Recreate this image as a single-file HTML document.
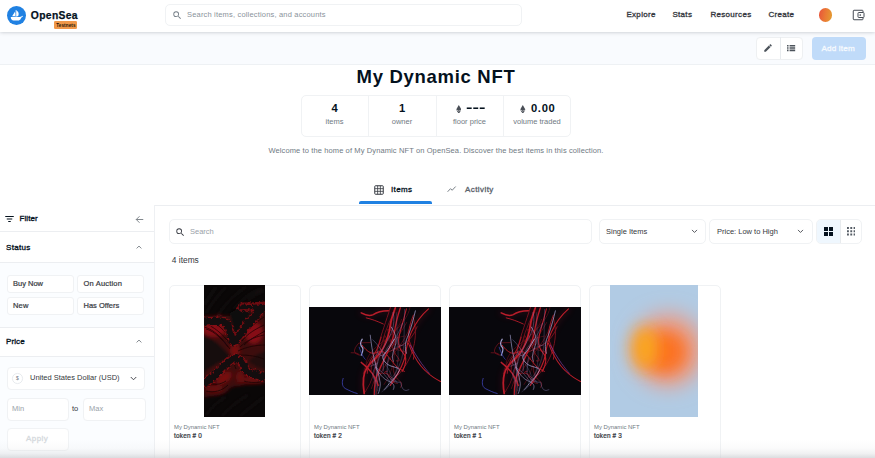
<!DOCTYPE html>
<html><head><meta charset="utf-8"><title>My Dynamic NFT - OpenSea</title>
<style>
*{box-sizing:border-box;margin:0;padding:0}
html,body{width:875px;height:458px;overflow:hidden;background:#fff}
body{position:relative;font-family:"Liberation Sans",sans-serif;color:#04111d}
.a{position:absolute;white-space:nowrap}
.t{position:absolute;white-space:nowrap;line-height:1}
#hdr{left:0;top:0;width:875px;height:32px;background:#fff;box-shadow:0 0 4px rgba(4,17,29,.25);z-index:5}
#sub{left:0;top:32px;width:875px;height:33px;background:#f9fbfe;border-bottom:1px solid #eef1f4}
.box{position:absolute;border:1px solid #f0f2f4;border-radius:4px;background:#fff}
</style></head><body>

<!-- sub bar -->
<div id="sub" class="a"></div>
<div class="box" style="left:756px;top:37px;width:46.500px;height:22.500px;border-color:#eef0f2"></div>
<div class="a" style="left:780px;top:37px;width:1px;height:22px;background:#e8ebee"></div>
<svg class="a" style="left:763px;top:43px" width="10" height="10" viewBox="0 0 24 24"><path fill="#4c535b" d="M3 17.25V21h3.75L17.81 9.94l-3.75-3.75L3 17.25zM20.71 7.04a1 1 0 0 0 0-1.41l-2.34-2.34a1 1 0 0 0-1.41 0l-1.83 1.83 3.75 3.75 1.83-1.83z"/></svg>
<svg class="a" style="left:786px;top:43px" width="10" height="10" viewBox="0 0 24 24"><path fill="#4c535b" d="M2.500 4.500h3.600v3.800H2.500zM8.600 4.500H22v3.800H8.600zM2.500 10.100h3.600v3.800H2.500zM8.600 10.100H22v3.800H8.600zM2.500 15.700h3.600v3.800H2.500zM8.600 15.700H22v3.800H8.600z"/></svg>
<div class="a" style="left:812px;top:37px;width:54px;height:22.500px;border-radius:4px;background:#c0dbf9"></div>
<div class="t" style="left:821.500px;top:44.600px;font-size:8.100px;color:#f6fafe;letter-spacing:0.17px;-webkit-text-stroke:0.3px #f6fafe">Add item</div>

<!-- header -->
<div id="hdr" class="a">
  <div class="a" style="left:7.400px;top:5.700px;width:18.900px;height:18.900px;border-radius:50%;background:#2081e2"></div>
  <svg class="a" style="left:7.400px;top:5.700px" width="18.900" height="18.900" viewBox="0 0 100 100"><path fill="#fff" d="M27 54L42 30C44 38 44 47 43 54ZM46 21h3.500V62H46ZM50.500 24C60 30 66 40 59 54H50.500ZM20 58H46V62H49.500V58H68C74 58 78 54 84 52V56C78 58 75 64 72 69C69 74 65 77 59 77H35C26 77 20 70 20 60Z"/></svg>
  <div class="t" style="left:30.800px;top:10.900px;font-size:10.300px;font-weight:bold;letter-spacing:.36px;-webkit-text-stroke:.25px #04111d">OpenSea</div>
  <div class="a" style="left:54px;top:21.4px;width:23.3px;height:7.3px;border-radius:1.2px;background:#f0984a"></div>
  <div class="t" style="left:56.200px;top:24.200px;font-size:4.600px;font-weight:bold;color:#1f1508;letter-spacing:.12px">Testnets</div>
  <div class="box" style="left:165px;top:4px;width:357px;height:22px;border-radius:5px"></div>
  <svg class="a" style="left:171.500px;top:9.800px" width="10.500" height="10.500" viewBox="0 0 24 24"><path fill="#707a83" d="M15.5 14h-.79l-.28-.27A6.47 6.47 0 0 0 16 9.5 6.5 6.5 0 1 0 9.500 16c1.610 0 3.090-.59 4.230-1.570l.27.28v.79l5 4.990L20.490 19l-4.990-5zm-6 0C7.010 14 5 11.990 5 9.500S7.010 5 9.500 5 14 7.010 14 9.500 11.990 14 9.500 14z"/></svg>
  <div class="t" style="left:187px;top:11.300px;font-size:7.500px;letter-spacing:.18px;color:#8a939b">Search items, collections, and accounts</div>
  <div class="t" style="left:626.400px;top:11.300px;font-size:8px;letter-spacing:.32px;-webkit-text-stroke:.32px #353840;color:#353840">Explore</div>
  <div class="t" style="left:672.400px;top:11.300px;font-size:8px;letter-spacing:.32px;-webkit-text-stroke:.32px #353840;color:#353840">Stats</div>
  <div class="t" style="left:710.400px;top:11.300px;font-size:8px;letter-spacing:.32px;-webkit-text-stroke:.32px #353840;color:#353840">Resources</div>
  <div class="t" style="left:768.400px;top:11.300px;font-size:8px;letter-spacing:.32px;-webkit-text-stroke:.32px #353840;color:#353840">Create</div>
  <div class="a" style="left:818.600px;top:8.200px;width:13.400px;height:13.400px;border-radius:50%;background:linear-gradient(100deg,#e8523c 0%,#ea7a34 50%,#e3a030 100%)"></div>
  <svg class="a" style="left:852px;top:9px" width="13" height="12" viewBox="0 0 26 24"><path fill="none" stroke="#454b54" stroke-width="2" d="M22 6V4a1.500 1.500 0 0 0-1.500-1.500H4A1.500 1.500 0 0 0 2.500 4v16A1.500 1.500 0 0 0 4 21.500h16.500A1.500 1.500 0 0 0 22 20v-2"/><rect x="12" y="7" width="12" height="10" rx="1.500" fill="none" stroke="#454b54" stroke-width="2"/><circle cx="16.500" cy="12" r="1.700" fill="#454b54"/></svg>
</div>

<!-- title -->
<div class="t" style="left:0;width:875px;text-align:center;top:67.800px;font-size:18.500px;font-weight:bold;left:-1.500px;letter-spacing:.7px">My Dynamic NFT</div>

<!-- stats -->
<div class="box" style="left:300.500px;top:94.500px;width:270.500px;height:42.500px;border-radius:5px"></div>
<div class="a" style="left:368px;top:95px;width:1px;height:42px;background:#f0f2f4"></div>
<div class="a" style="left:436px;top:95px;width:1px;height:42px;background:#f0f2f4"></div>
<div class="a" style="left:503px;top:95px;width:1px;height:42px;background:#f0f2f4"></div>
<div class="t" style="left:301px;width:67px;text-align:center;top:103px;font-size:11.200px;font-weight:bold">4</div>
<div class="t" style="left:368px;width:68px;text-align:center;top:103px;font-size:11.200px;font-weight:bold">1</div>
<div class="t" style="left:466px;top:103px;font-size:11.200px;font-weight:bold;transform:scale(1.740,1.150);transform-origin:0 60%">---</div>
<div class="t" style="left:531px;top:103px;font-size:11.200px;font-weight:bold;letter-spacing:.65px">0.00</div>
<svg class="a" style="left:455.600px;top:104.600px" width="5.600" height="8.800" viewBox="0 0 14 22"><path fill="#4a4f57" d="M7 0 L0.500 11 L7 15 L13.500 11 Z"/><path fill="#4a4f57" d="M7 16.300 L0.500 12.400 L7 22 L13.500 12.400 Z"/></svg>
<svg class="a" style="left:520.400px;top:104.600px" width="5.600" height="8.800" viewBox="0 0 14 22"><path fill="#4a4f57" d="M7 0 L0.500 11 L7 15 L13.500 11 Z"/><path fill="#4a4f57" d="M7 16.300 L0.500 12.400 L7 22 L13.500 12.400 Z"/></svg>
<div class="t" style="left:301px;width:67px;text-align:center;top:118px;font-size:7.500px;color:#707a83">items</div>
<div class="t" style="left:368px;width:68px;text-align:center;top:118px;font-size:7.500px;color:#707a83">owner</div>
<div class="t" style="left:436px;width:67px;text-align:center;top:118px;font-size:7.500px;color:#707a83">floor price</div>
<div class="t" style="left:503px;width:68px;text-align:center;top:118px;font-size:7.500px;color:#707a83">volume traded</div>

<div class="t" style="left:0;width:872px;text-align:center;top:146.500px;font-size:7.500px;letter-spacing:.115px;color:#707a83">Welcome to the home of My Dynamic NFT on OpenSea. Discover the best items in this collection.</div>

<!-- tabs -->
<div class="a" style="left:0;top:204.500px;width:875px;height:1px;background:#eceef1"></div>
<div class="a" style="left:359px;top:201.300px;width:73px;height:2.900px;background:#2081e2;border-radius:2px 2px 0 0"></div>
<svg class="a" style="left:373.500px;top:184.500px" width="10" height="10" viewBox="0 0 20 20"><rect x="1.500" y="1.500" width="17" height="17" rx="1.500" fill="none" stroke="#353840" stroke-width="2"/><path stroke="#353840" stroke-width="1.600" d="M1.500 7.300H18.500M1.500 12.700H18.500M7.300 1.500V18.500M12.700 1.500V18.500"/></svg>
<div class="t" style="left:391px;top:185.700px;font-size:8px;color:#04111d;letter-spacing:0.36px;-webkit-text-stroke:0.3px #04111d">Items</div>
<svg class="a" style="left:447px;top:186px" width="9.500" height="6.500" viewBox="0 0 22 16"><path fill="none" stroke="#5a626b" stroke-width="2" stroke-linejoin="round" stroke-linecap="round" d="M1.500 13.500L8 6.500L12 10.500L20 2"/></svg>
<div class="t" style="left:465px;top:185.700px;font-size:8px;color:#5a626b;letter-spacing:0.42px;-webkit-text-stroke:0.3px #5a626b">Activity</div>

<!-- sidebar -->
<div class="a" style="left:0;top:205px;width:154px;height:253px;background:#fbfdff"></div>
<div class="a" style="left:154px;top:205px;width:1px;height:253px;background:#eef0f3"></div>
<div class="a" style="left:0;top:205px;width:154px;height:27px;background:#fff;border-bottom:1px solid #eceef1"></div>
<svg class="a" style="left:5px;top:214.500px" width="9" height="8" viewBox="0 0 18 16"><path stroke="#04111d" stroke-width="2.200" d="M0.500 3H17.500M3.500 8H14.500M6.500 13H11.500"/></svg>
<div class="t" style="left:19.500px;top:214.500px;font-size:8px;letter-spacing:0.1px;-webkit-text-stroke:0.32px #04111d">Filter</div>
<svg class="a" style="left:135px;top:214.500px" width="9" height="9" viewBox="0 0 18 18"><path fill="none" stroke="#6a7178" stroke-width="1.700" d="M16.500 9H2.500M9 2.500L2.500 9L9 15.500"/></svg>
<div class="a" style="left:0;top:232px;width:154px;height:31px;background:#fff;border-bottom:1px solid #eceef1"></div>
<div class="t" style="left:6px;top:243.500px;font-size:8px;letter-spacing:0.32px;-webkit-text-stroke:0.32px #04111d">Status</div>
<svg class="a" style="left:136px;top:245px" width="6" height="4.300" viewBox="0 0 14 10"><path fill="none" stroke="#6a7178" stroke-width="2" d="M1.500 8L7 2.500L12.500 8"/></svg>
<div class="box" style="left:6.500px;top:274.500px;width:67px;height:18.500px;border-radius:3px"></div>
<div class="box" style="left:77px;top:274.500px;width:67px;height:18.500px;border-radius:3px"></div>
<div class="box" style="left:6.500px;top:296.500px;width:67px;height:18.500px;border-radius:3px"></div>
<div class="box" style="left:77px;top:296.500px;width:67px;height:18.500px;border-radius:3px"></div>
<div class="t" style="left:13px;top:280.200px;font-size:7.500px;color:#353840;letter-spacing:0.0px;-webkit-text-stroke:0.2px #353840">Buy Now</div>
<div class="t" style="left:83.500px;top:280.200px;font-size:7.500px;color:#353840;letter-spacing:0.18px;-webkit-text-stroke:0.2px #353840">On Auction</div>
<div class="t" style="left:13px;top:302.200px;font-size:7.500px;color:#353840;letter-spacing:0.18px;-webkit-text-stroke:0.2px #353840">New</div>
<div class="t" style="left:83.500px;top:302.200px;font-size:7.500px;color:#353840;letter-spacing:0px;-webkit-text-stroke:0.2px #353840">Has Offers</div>
<div class="a" style="left:0;top:326.500px;width:154px;height:30.500px;background:#fff;border-top:1px solid #eceef1;border-bottom:1px solid #eceef1"></div>
<div class="t" style="left:6px;top:337.500px;font-size:8px;letter-spacing:0.09px;-webkit-text-stroke:0.32px #04111d">Price</div>
<svg class="a" style="left:136px;top:339px" width="6" height="4.300" viewBox="0 0 14 10"><path fill="none" stroke="#6a7178" stroke-width="2" d="M1.500 8L7 2.500L12.500 8"/></svg>
<div class="box" style="left:6.500px;top:367.300px;width:138.500px;height:23px;border-radius:4px"></div>
<div class="a" style="left:12.200px;top:373.200px;width:10.500px;height:10.500px;border-radius:50%;border:1px solid #e8ebee;background:#fff"></div>
<div class="t" style="left:16px;top:376px;font-size:5px;color:#707a83">$</div>
<div class="t" style="left:30px;top:374.300px;font-size:7.500px;color:#353840">United States Dollar (USD)</div>
<svg class="a" style="left:130px;top:376px" width="7" height="5" viewBox="0 0 14 10"><path fill="none" stroke="#353840" stroke-width="1.800" d="M1.500 2L7 7.500L12.500 2"/></svg>
<div class="box" style="left:6.500px;top:398.200px;width:62px;height:22.500px;border-radius:4px"></div>
<div class="box" style="left:83px;top:398.200px;width:62.500px;height:22.500px;border-radius:4px"></div>
<div class="t" style="left:12px;top:405px;font-size:7.500px;color:#9aa2a9">Min</div>
<div class="t" style="left:72px;top:405px;font-size:7.500px;color:#353840">to</div>
<div class="t" style="left:89px;top:405px;font-size:7.500px;color:#9aa2a9">Max</div>
<div class="box" style="left:6.500px;top:427.500px;width:62px;height:23px;border-radius:4px;border-color:#f1f3f5"></div>
<div class="t" style="left:26px;top:435px;font-size:8px;color:#d5d9dd;letter-spacing:0.44px;-webkit-text-stroke:0.3px #d5d9dd">Apply</div>

<!-- main toolbar -->
<div class="box" style="left:168.500px;top:219px;width:423px;height:24.500px;border-radius:5px"></div>
<svg class="a" style="left:174.500px;top:226.500px" width="10.500" height="10.500" viewBox="0 0 24 24"><path fill="#353840" d="M15.5 14h-.79l-.28-.27A6.47 6.47 0 0 0 16 9.5 6.5 6.5 0 1 0 9.500 16c1.610 0 3.090-.59 4.230-1.570l.27.28v.79l5 4.990L20.490 19l-4.990-5zm-6 0C7.010 14 5 11.990 5 9.500S7.010 5 9.500 5 14 7.010 14 9.500 11.990 14 9.500 14z"/></svg>
<div class="t" style="left:190px;top:227.500px;font-size:7.500px;color:#9aa2a9">Search</div>
<div class="box" style="left:599px;top:219px;width:106.500px;height:24.500px;border-radius:5px"></div>
<div class="t" style="left:606px;top:227.500px;font-size:7.500px;color:#353840">Single Items</div>
<svg class="a" style="left:690.500px;top:229.300px" width="7" height="4.600" viewBox="0 0 14 10"><path fill="none" stroke="#353840" stroke-width="1.800" d="M1.500 2L7 7.500L12.500 2"/></svg>
<div class="box" style="left:709px;top:219px;width:103.500px;height:24.500px;border-radius:5px"></div>
<div class="t" style="left:717px;top:227.500px;font-size:7.500px;color:#353840">Price: Low to High</div>
<svg class="a" style="left:797px;top:229.300px" width="7" height="4.600" viewBox="0 0 14 10"><path fill="none" stroke="#353840" stroke-width="1.800" d="M1.500 2L7 7.500L12.500 2"/></svg>
<div class="box" style="left:816px;top:219px;width:46px;height:24.500px;border-radius:5px;overflow:hidden"><div style="width:23.500px;height:24px;background:#eff7fe;border-right:1px solid #e8ebee"></div></div>
<svg class="a" style="left:823.500px;top:227px" width="9" height="9" viewBox="0 0 18 18"><path fill="#04111d" d="M0 0h8v8H0zM10 0h8v8h-8zM0 10h8v8H0zM10 10h8v8h-8z"/></svg>
<svg class="a" style="left:846.800px;top:227.200px" width="8.500" height="8.500" viewBox="0 0 18 18"><path fill="#555c65" d="M0 0h4v4H0zM7 0h4v4H7zM14 0h4v4h-4zM0 7h4v4H0zM7 7h4v4H7zM14 7h4v4h-4zM0 14h4v4H0zM7 14h4v4H7zM14 14h4v4h-4z"/></svg>
<div class="t" style="left:171.800px;top:256.300px;font-size:8.400px;color:#353840">4 items</div>

<!-- cards -->
<div class="box" style="left:168.500px;top:284.500px;width:132.500px;height:190px;border-radius:5px"></div>
<div class="box" style="left:308.500px;top:284.500px;width:132.500px;height:190px;border-radius:5px"></div>
<div class="box" style="left:448.500px;top:284.500px;width:132.500px;height:190px;border-radius:5px"></div>
<div class="box" style="left:588.500px;top:284.500px;width:132.500px;height:190px;border-radius:5px"></div>

<svg class="a" style="left:204px;top:285px" width="61" height="132" viewBox="0 0 61 132">
<defs>
<filter id="fb1" x="-20%" y="-20%" width="140%" height="140%"><feGaussianBlur stdDeviation="1.400"/></filter>
<filter id="fb3" x="-20%" y="-20%" width="140%" height="140%"><feGaussianBlur stdDeviation="2.200"/></filter>
<filter id="fb4" x="-20%" y="-20%" width="140%" height="140%"><feGaussianBlur stdDeviation="0.450"/></filter>
<filter id="fd" color-interpolation-filters="sRGB" x="-20%" y="-20%" width="140%" height="140%"><feTurbulence type="fractalNoise" baseFrequency="0.320" numOctaves="2" seed="4" result="n"/><feDisplacementMap in="SourceGraphic" in2="n" scale="5.500" xChannelSelector="R" yChannelSelector="G"/><feGaussianBlur stdDeviation="0.550"/></filter>
<filter id="fd2" color-interpolation-filters="sRGB" x="-20%" y="-20%" width="140%" height="140%"><feTurbulence type="fractalNoise" baseFrequency="0.400" numOctaves="2" seed="9" result="n"/><feDisplacementMap in="SourceGraphic" in2="n" scale="5.500" xChannelSelector="R" yChannelSelector="G"/><feGaussianBlur stdDeviation="0.700"/></filter>
<clipPath id="fc"><rect width="61" height="132"/></clipPath>
</defs>
<g clip-path="url(#fc)">
<rect width="61" height="132" fill="#0a0707"/>
<g filter="url(#fb1)" stroke="#2a2627" stroke-width=".9" fill="none" opacity=".8">
<path d="M2 28C8 18 14 10 22 2M14 30C22 18 30 10 42 2M30 24C38 14 46 8 58 4M44 16C50 10 54 8 60 6M2 130C8 122 14 116 22 112M18 131C26 122 34 116 44 110M36 131C44 124 52 118 60 112M0 20C4 14 8 8 12 2"/>
</g>
<g filter="url(#fb1)">
<path fill="#3e070a" d="M0 31C4 29 8 32 12 30C15 27 18 30 21 31C24 30 27 32 29 30C32 28 33 22 36 20C42 17 50 20 61 19L61 98C54 100 46 98 40 100C34 102 28 100 24 106C18 112 8 110 0 113Z"/>
<path fill="#0c0707" opacity=".85" d="M0 50C6 52 14 58 20 64C24 68 27 70 27 72C22 76 14 78 8 82C4 84 2 86 0 88Z"/>
<path fill="#0c0707" opacity=".55" d="M61 66C54 68 48 72 44 76C48 80 54 84 61 84Z"/>
<path fill="#0a0707" opacity=".95" d="M25 28C27 36 29 46 31 51C36 46 42 36 48 28C44 26 40 24 37 19C34 22 30 26 25 28Z"/>
</g>
<g filter="url(#fb3)">
<ellipse cx="10" cy="45" rx="12" ry="7" fill="#860c12"/>
<ellipse cx="31" cy="65" rx="5" ry="7" fill="#760b10"/>
<ellipse cx="50" cy="48" rx="9" ry="11" fill="#860c12"/>
<ellipse cx="20" cy="93" rx="9" ry="5" fill="#780b10" transform="rotate(-35 20 93)"/>
<ellipse cx="10" cy="104" rx="9" ry="3.500" fill="#6a0a0f"/>
<ellipse cx="48" cy="95" rx="10" ry="3" fill="#6c0a0f"/>
<ellipse cx="36" cy="92" rx="4" ry="6" fill="#6a0a0f"/>
</g>
<g filter="url(#fb4)" fill="none" stroke="#170809" stroke-width=".8" opacity=".85">
<path d="M2 44C10 46 18 54 26 64M0 38C10 42 18 48 27 60M4 34C12 38 20 44 28 56M36 62C42 56 50 52 60 50M34 66C42 62 52 60 61 60M38 56C44 48 52 44 60 40M42 48C48 40 54 36 60 32M33 70C40 70 50 70 60 74M30 70C30 76 30 80 32 84M26 72C24 78 20 82 14 86M4 98C10 100 16 100 22 96M2 106C10 108 18 106 24 100M40 96C46 98 54 98 60 96M0 42C8 44 16 50 24 62M40 60C46 54 54 50 61 46"/>
</g>
<!-- red rim around chains -->
<g filter="url(#fd2)" fill="none" stroke="#8e0e15" stroke-linecap="round" stroke-linejoin="round" opacity=".72">
<path stroke-width="9" d="M0 37C5 36 10 37 15 36C19 36 22 37 24 41C26 47 27 53 30 57C34 55 36 50 39 46C42 42 43 38 47 36C51 33 53 29 55 26C57 24 59 24 61 23M38 22C46 22 54 22 61 21"/>
<path stroke-width="9" d="M0 98C5 96 9 92 13 88C17 84 21 80 25 77C28 74 31 73 34 74C38 76 40 80 41 84C44 88 50 90 61 92"/>
</g>
<g filter="url(#fd)" fill="none" stroke="#130e0f" stroke-linecap="round" stroke-linejoin="round">
<path stroke-width="7" d="M0 37C5 36 10 37 15 36C19 36 22 37 24 41C26 47 27 53 30 57C34 55 36 50 39 46C42 42 43 38 47 36C51 33 53 29 55 26C57 24 59 24 61 23"/>
<path stroke-width="4.500" d="M38 22C42 21 46 23 50 22C54 21 57 23 61 22"/>
<path stroke-width="7" d="M0 98C5 96 9 92 13 88C17 84 21 80 25 77C28 74 31 73 34 74C38 76 40 80 41 84C44 88 50 90 61 92"/>
</g>
</g>
</svg>
<svg class="a" style="left:309px;top:307px" width="132" height="88" viewBox="0 0 131.500 87.500" preserveAspectRatio="none">
<defs><filter id="lb" x="-10%" y="-10%" width="120%" height="120%"><feGaussianBlur stdDeviation="0.500"/></filter>
<filter id="lglow" x="-30%" y="-30%" width="160%" height="160%"><feGaussianBlur stdDeviation="3"/></filter>
<clipPath id="lc"><rect width="131.500" height="87.500"/></clipPath>
<g id="streaks" clip-path="url(#lc)"><rect width="131.500" height="87.500" fill="#08070c"/>
<g filter="url(#lglow)" fill="none" stroke="#a01424" stroke-width="4" opacity=".22" stroke-linecap="round">
<path d="M86 0.800C83 8 81 16 80 24C78 32 76 38 72 44C68 50 62 54 58 60C54 66 53 74 55 86M91 0.800C88 10 86 18 85 26C83 34 80 42 76 50C72 58 68 66 66 74M119 1.800C112 8 106 16 102 25C99 32 97 40 96 48C94 56 90 64 86 70M52 5.800C56 8 60 9.500 64 7.500C68 5 73 4 79 3.800"/>
</g>
<g filter="url(#lb)" fill="none" stroke-linecap="round" stroke-linejoin="round">
<g stroke="#b01a28" opacity=".7"><path stroke-width="0.5" d="M92.3 12.3C85.3 34.6 53.0 38.5 57.1 62.2"/><path stroke-width="0.9" d="M81.4 -0.5C71.3 31.1 64.7 45.6 66.7 62.7"/><path stroke-width="0.9" d="M103.8 10.7C109.2 26.6 105.7 53.2 84.2 71.9"/><path stroke-width="0.7" d="M85.5 4.8C68.5 31.4 70.5 63.9 56.0 84.5"/><path stroke-width="0.5" d="M100.8 -0.7C97.9 22.9 58.2 40.7 54.1 66.2"/><path stroke-width="0.6" d="M97.2 15.5C82.1 42.0 73.0 48.8 62.2 81.0"/><path stroke-width="0.9" d="M107.7 19.6C97.4 49.7 60.7 40.3 61.8 63.5"/><path stroke-width="0.5" d="M81.5 14.8C84.0 36.1 91.0 51.5 74.7 77.2"/><path stroke-width="0.6" d="M102.0 16.5C93.3 44.8 63.5 60.2 67.5 88.3"/><path stroke-width="0.7" d="M85.2 74.7Q80.0 76.8 83.4 71.2Q82.5 69.9 74.8 65.0Q81.2 63.1 76.2 64.1"/><path stroke-width="0.5" d="M94.6 29.0Q92.2 29.5 85.0 31.2Q86.2 38.5 95.9 44.8Q93.0 44.5 84.7 41.2"/><path stroke-width="0.6" d="M85.7 25.6Q80.0 21.7 78.3 22.3Q79.9 33.6 83.7 36.8"/><path stroke-width="0.7" d="M83.9 58.8Q82.9 68.7 91.9 75.0Q93.4 77.4 91.2 80.0"/><path stroke-width="0.6" d="M74.8 34.5Q73.4 32.3 75.4 28.1Q77.0 32.7 86.0 37.8"/><path stroke-width="0.7" d="M61.0 35.4Q52.5 35.4 49.5 36.0Q40.4 45.6 50.3 48.0Q49.9 45.3 41.9 45.5"/><path stroke-width="0.6" d="M69.1 66.4Q69.5 65.7 78.6 66.2Q83.1 76.9 88.3 76.2"/><path stroke-width="0.9" d="M85.0 29.6Q85.4 40.1 82.6 38.1Q83.6 42.1 86.3 47.2Q93.2 55.3 87.1 53.6"/></g>
<g stroke="#cc1f2d" opacity=".9">
<path stroke-width="1.44" d="M52 5.800C56 8 60 9.500 64 7.500C68 5 73 4 79 3.800"/>
<path stroke-width="0.88" d="M57 10.800C62 12 68 14 74 16.900"/>
<path stroke-width="1.76" d="M86 0.800C83 8 81 16 80 24C78 32 76 38 72 44C68 50 62 54 58 60C54 66 53 74 55 86"/>
<path stroke-width="1.28" d="M91 0.800C88 10 86 18 85 26C83 34 80 42 76 50C72 58 68 66 66 74C65 80 65 84 65 87"/>
<path stroke-width="1.04" d="M97 1.800C95 10 92 20 90 28C88 36 90 42 94 46C98 50 97 56 93 64"/>
<path stroke-width="1.12" d="M119 1.800C112 8 106 16 102 25C99 32 97 40 96 48C94 56 90 64 86 70C84 74 82 76 81 78"/>
<path stroke-width="1.04" d="M99 36C101 42 104 48 108 54C112 60 118 66 124 70C127 72 129 73 131 74"/>
<path stroke-width="1.44" d="M52 55C56 58 60 62 63 66C66 70 68 74 69 78"/>
<path stroke-width="0.96" d="M53 38C56 42 60 46 64 46C68 46 72 42 76 46C80 50 84 56 88 60C91 62 93 63 95 64"/>
<path stroke-width="0.8" d="M72 30C70 38 66 46 62 52C60 56 58 60 58 66"/>
<path stroke-width="0.8" d="M104 8C100 18 98 26 100 34C102 40 106 44 104 52"/>
</g>
<g stroke="#8f8ac4" opacity=".55"><path stroke-width="0.5" d="M95.2 2.4C93.7 37.2 98.6 51.9 79.3 74.8"/><path stroke-width="0.4" d="M87.4 5.6C85.6 27.6 97.8 70.4 72.6 84.3"/><path stroke-width="0.7" d="M83.9 5.4C89.5 32.6 62.0 41.6 68.0 74.5"/><path stroke-width="0.7" d="M93.1 16.4C82.0 45.6 74.2 31.1 73.9 63.6"/><path stroke-width="0.5" d="M76.2 56.8Q83.4 68.3 81.4 69.6Q92.1 77.2 85.5 73.4"/><path stroke-width="0.5" d="M64.3 70.2Q67.0 75.8 66.5 86.7Q58.3 91.4 48.7 99.8"/><path stroke-width="0.5" d="M88.5 30.1Q86.9 40.1 93.4 37.9Q87.5 38.6 82.3 43.1"/><path stroke-width="0.7" d="M68.9 46.0Q58.4 53.8 66.3 59.7Q73.9 64.0 80.4 73.8"/><path stroke-width="0.7" d="M63.5 32.6Q72.4 41.0 74.6 49.0Q66.2 47.2 68.6 43.4"/><path stroke-width="0.6" d="M60.6 59.1Q67.4 56.8 68.6 55.3Q63.3 63.6 63.4 67.8Q69.7 78.4 68.5 83.4"/><path stroke-width="0.7" d="M79.2 50.6Q78.1 55.1 77.7 66.1Q82.4 76.1 91.3 74.8Q92.7 85.9 99.5 82.3"/></g>
<g stroke="#b4b0e4" opacity=".9">
<path stroke-width="1.2" d="M53 32C51 35 51 38 53 40C55 42 53 45 52 48"/>
<path stroke-width="0.72" d="M106 3.800C104 12 102 20 99 28C96 34 95 40 97 46"/>
<path stroke-width="0.8" d="M85 32C82 38 78 44 74 48C72 51 76 56 80 58C84 60 90 60 90 63C88 68 84 72 80 76C78 79 76 81 75 82"/>
<path stroke-width="0.64" d="M61 28C62 36 63 44 65 52C67 60 70 68 71 76C71 80 70 84 69 86"/>
<path stroke-width="0.64" d="M82 20C86 26 88 32 86 38C84 44 82 50 84 54"/>
<path stroke-width="0.56" d="M66 60C70 66 74 72 80 74C84 76 86 78 84 82"/>
</g>
<g stroke="#3f45b8">
<path stroke-width="0.800" d="M34 71C32.500 75 33 79 36 81C40 83 44 85 48 86"/>
<path stroke-width="0.700" d="M101 38C104 44 108 50 112 56C115 60 118 64 120 66" stroke="#7a3a9a"/>
<path stroke-width="0.700" d="M50 40C52 46 54 50 56 52"/>
</g>
</g></g></defs>
<use href="#streaks"/>
</svg>
<svg class="a" style="left:449px;top:307px" width="132" height="88" viewBox="0 0 131.500 87.500" preserveAspectRatio="none"><use href="#streaks"/></svg>
<svg class="a" style="left:610px;top:285px" width="88" height="132" viewBox="0 0 88 132">
<defs><filter id="gb1" x="-80%" y="-80%" width="260%" height="260%"><feGaussianBlur stdDeviation="10"/></filter>
<filter id="gb2" x="-80%" y="-80%" width="260%" height="260%"><feGaussianBlur stdDeviation="7.500"/></filter>
<clipPath id="gc"><rect width="88" height="132"/></clipPath></defs>
<g clip-path="url(#gc)">
<rect width="88" height="132" fill="#b1cbe4"/>
<ellipse cx="58" cy="65" rx="36" ry="37" fill="#e99c88" filter="url(#gb1)"/>
<ellipse cx="55" cy="67" rx="22" ry="22" fill="#fc7224" filter="url(#gb2)"/>
<ellipse cx="35" cy="63" rx="13" ry="21" fill="#faa61c" filter="url(#gb2)"/>
</g>
</svg>

<div class="t" style="left:174px;top:424.800px;font-size:5.900px;color:#707a83">My Dynamic NFT</div>
<div class="t" style="left:314px;top:424.800px;font-size:5.900px;color:#707a83">My Dynamic NFT</div>
<div class="t" style="left:454px;top:424.800px;font-size:5.900px;color:#707a83">My Dynamic NFT</div>
<div class="t" style="left:594px;top:424.800px;font-size:5.900px;color:#707a83">My Dynamic NFT</div>
<div class="t" style="left:174px;top:432.800px;font-size:6.400px;color:#353840;letter-spacing:0.2px;-webkit-text-stroke:0.22px #353840">token # 0</div>
<div class="t" style="left:314px;top:432.800px;font-size:6.400px;color:#353840;letter-spacing:0.2px;-webkit-text-stroke:0.22px #353840">token # 2</div>
<div class="t" style="left:454px;top:432.800px;font-size:6.400px;color:#353840;letter-spacing:0.2px;-webkit-text-stroke:0.22px #353840">token # 1</div>
<div class="t" style="left:594px;top:432.800px;font-size:6.400px;color:#353840;letter-spacing:0.2px;-webkit-text-stroke:0.22px #353840">token # 3</div>

<div class="a" style="left:0;top:440px;width:875px;height:18px;background:linear-gradient(rgba(212,214,217,0) 0%,rgba(212,214,217,.1) 45%,rgba(208,210,213,.32) 75%,rgba(200,202,206,.65) 100%);z-index:9"></div>
</body></html>
